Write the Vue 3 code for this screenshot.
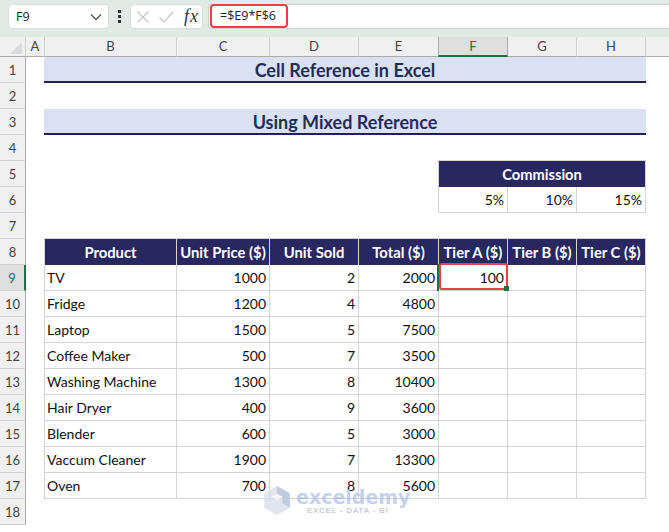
<script setup>
const cols = ['A','B','C','D','E','F','G','H']
const rowNums = Array.from({ length: 18 }, (_, i) => i + 1)
const heads = ['Product','Unit Price ($)','Unit Sold','Total ($)','Tier A ($)','Tier B ($)','Tier C ($)']
const rows = [
  ['TV',1000,2,2000],['Fridge',1200,4,4800],['Laptop',1500,5,7500],['Coffee Maker',500,7,3500],
  ['Washing Machine',1300,8,10400],['Hair Dryer',400,9,3600],['Blender',600,5,3000],
  ['Vaccum Cleaner',1900,7,13300],['Oven',700,8,5600]
]
</script>

<template>
  <div class="app">
    <div class="fbar">
      <div class="namebox"><span>F9</span>
        <svg width="14" height="8" viewBox="0 0 14 8"><path d="M2 1.500 7 6.500 12 1.500" fill="none" stroke="#555" stroke-width="1.3"/></svg>
      </div>
      <div class="dots"><i></i><i></i><i></i></div>
      <div class="fbtns">
        <svg width="14" height="14" viewBox="0 0 14 14"><path d="M1.500 1.500 12.500 12.500M12.500 1.500 1.500 12.500" stroke="#c4c4c4" stroke-width="1.2"/></svg>
        <svg class="chk" width="16" height="14" viewBox="0 0 16 14"><path d="M1.500 7.500 6 12 15 2" fill="none" stroke="#c4c4c4" stroke-width="1.2"/></svg>
        <span class="fx">fx</span>
      </div>
      <div class="finput"><span class="fhl">=$E9*F$6</span></div>
    </div>
    <div class="sheet">
      <div class="corner"><svg width="12" height="12" viewBox="0 0 12 12"><path d="M12 0V12H0Z" fill="#d9d9d9"/></svg></div>
      <div v-for="c in cols" :key="c" class="colh" :class="{ on: c === 'F' }">{{ c }}</div>
      <div class="colh rest"></div>
      <div class="rowhs">
        <div v-for="n in rowNums" :key="n" class="rowh" :class="{ on: n === 9 }">{{ n }}</div>
      </div>
      <div class="cells">
        <div class="title t1">Cell Reference in Excel</div>
        <div class="title t3">Using Mixed Reference</div>
        <div class="commh">Commission</div>
        <div class="cell num cp1">5%</div>
        <div class="cell num cp2">10%</div>
        <div class="cell num cp3">15%</div>
        <div class="tbl">
          <div v-for="h in heads" :key="h" class="th">{{ h }}</div>
          <template v-for="(r, i) in rows" :key="i">
            <div class="cell">{{ r[0] }}</div>
            <div class="cell num">{{ r[1] }}</div>
            <div class="cell num">{{ r[2] }}</div>
            <div class="cell num">{{ r[3] }}</div>
            <div class="cell num" :class="{ sel: i === 0 }">
              <template v-if="i === 0">100<b class="handle"></b></template>
            </div>
            <div class="cell"></div>
            <div class="cell"></div>
          </template>
        </div>
      </div>
      <div class="wm">
        <svg width="28" height="31" viewBox="0 0 30 34">
          <path d="M15 1 29 9V25L15 33 1 25V9Z" fill="#d5dcea" opacity=".75"/>
          <path d="M15 1 29 9V25L21 20V13L15 9.500Z" fill="#b4c0d8" opacity=".75"/>
          <path d="M9 13 15 9.500 21 13 15 17Z" fill="#fff" opacity=".6"/>
        </svg>
        <div class="wmt"><div class="wm1">exceldemy</div><div class="wm2">EXCEL - DATA - BI</div></div>
      </div>
    </div>
  </div>
</template>

<style scoped>
.app { width: 669px; height: 532px; overflow: hidden; background: #fff; font-family: Lato, "Liberation Sans", sans-serif; color: #1c1c1c; }
.fbar { height: 37px; box-sizing: border-box; background: #e1ebe6; display: flex; align-items: flex-start; padding: 4px 0 0 8px; }
.namebox { width: 101px; height: 25px; box-sizing: border-box; background: #fff; border: 1px solid #dcdcdc; border-radius: 4px; display: flex; align-items: center; justify-content: space-between; padding: 0 5px 0 7px; font-family: "Open Sans", sans-serif; font-size: 12.5px; }
.dots { width: 21px; height: 25px; display: flex; flex-direction: column; align-items: center; justify-content: center; gap: 2px; }
.dots i { width: 3px; height: 3px; background: #333; }
.fbtns { width: 73px; height: 25px; box-sizing: border-box; background: #fff; border: 1px solid #dcdcdc; border-radius: 4px; display: flex; align-items: center; padding: 0 3px 0 5px; }
.chk { margin-left: 8px; }
.fx { font-family: "Liberation Serif", serif; font-style: italic; font-size: 18px; letter-spacing: 1px; margin-left: auto; color: #333; }
.finput { flex: 1; height: 25px; box-sizing: border-box; margin-left: 5px; background: #fff; border: 1px solid #d0d0d0; border-right: 0; border-radius: 4px 0 0 4px; position: relative; }
.fhl { position: absolute; left: 1px; top: -1px; width: 78px; height: 24px; box-sizing: border-box; border: 2px solid #ec3f43; border-radius: 4px; font-family: "Open Sans", sans-serif; font-size: 12.5px; padding-left: 8px; line-height: 20px; color: #222; }
.sheet { position: relative; display: grid; grid-template-columns: 26px 19px 132px 93px 89px 80px 69px 69px 69px 23px; grid-template-rows: 20px 475px; }
.corner { background: #f0f0f0; border-bottom: 1px solid #ababab; border-right: 1px solid #d0d0d0; box-sizing: border-box; display: flex; align-items: flex-end; justify-content: flex-end; padding: 0 3px 2px 0; }
.colh { background: #f0f0f0; border-bottom: 1px solid #ababab; border-right: 1px solid #d0d0d0; box-sizing: border-box; text-align: center; font-size: 13px; line-height: 19px; color: #444; }
.colh.on { background: #dfdfdf; border-bottom: 2px solid #1e7145; color: #1e7145; border-left: 1px solid #ababab; border-right: 1px solid #ababab; margin-left: -1px; }
.colh.rest { border-right: 0; }
.rowhs { overflow: hidden; }
.rowh { height: 26px; box-sizing: border-box; background: #f0f0f0; border-bottom: 1px solid #d0d0d0; border-right: 1px solid #ababab; text-align: center; font-size: 13px; line-height: 27px; color: #444; }
.rowh.on { background: #dfdfdf; color: #1e7145; border-right: 2px solid #1e7145; }
.cells { grid-column: 2 / -1; display: grid; grid-template-columns: 19px 132px 93px 89px 80px 69px 69px 69px 23px; grid-template-rows: repeat(18, 26px); font-size: 14px; }
.title { grid-column: 2 / 9; margin-left: -1px; background: #d9e1f2; border-bottom: 2px solid #1f2158; box-sizing: border-box; color: #1f2d5a; font-weight: 700; font-size: 18px; text-align: center; line-height: 26px; }
.t1 { grid-row: 1; }
.t3 { grid-row: 3; }
.commh { grid-row: 5; grid-column: 6 / 9; margin: -1px 0 0 -1px; background: #28275f; color: #fff; font-weight: 700; text-align: center; line-height: 26px; font-size: 14.7px; border: 1px solid #d4d4d4; border-width: 1px 1px 0 1px; box-sizing: border-box; }
.cp1 { grid-row: 6; grid-column: 6; border-left: 1px solid #d4d4d4; margin-left: -1px; }
.cp2 { grid-row: 6; grid-column: 7; }
.cp3 { grid-row: 6; grid-column: 8; }
.tbl { grid-row: 8 / 18; grid-column: 2 / 9; display: grid; grid-template-columns: 132px 93px 89px 80px 69px 69px 69px; grid-template-rows: 27px; grid-auto-rows: 26px; margin-top: -1px; border-left: 1px solid #d4d4d4; margin-left: -1px; }
.th { background: #28275f; color: #fff; font-weight: 700; text-align: center; font-size: 14.8px; line-height: 26px; white-space: nowrap; box-sizing: border-box; border-top: 1px solid #d4d4d4; border-right: 1px solid #d4d4d4; }
.cell { box-sizing: border-box; border-right: 1px solid #d4d4d4; border-bottom: 1px solid #d4d4d4; line-height: 26px; padding: 0 3px 0 2px; white-space: nowrap; color: #111; }
.num { text-align: right; }
.sel { position: relative; }
.sel::before { content: ""; position: absolute; left: -2px; top: -1px; width: 2px; bottom: -1px; background: #1e7145; }
.sel::after { content: ""; position: absolute; left: 0; top: -2px; right: -1px; bottom: 0; border: 2px solid #ec3f43; border-radius: 3px; }
.handle { position: absolute; z-index: 1; right: -2px; bottom: -1px; width: 5px; height: 5px; background: #1e7145; }
.wm { position: absolute; left: 263px; top: 448px; display: flex; align-items: center; gap: 5px; pointer-events: none; }
.wm1 { font-family: "DejaVu Sans", sans-serif; font-weight: 700; font-size: 19px; line-height: 20px; color: rgba(170,190,230,.7); }
.wm2 { font-family: "Liberation Sans", sans-serif; font-size: 8px; font-weight: 700; letter-spacing: .7px; line-height: 8px; color: rgba(150,160,175,.55); margin-left: 11px; }
</style>
